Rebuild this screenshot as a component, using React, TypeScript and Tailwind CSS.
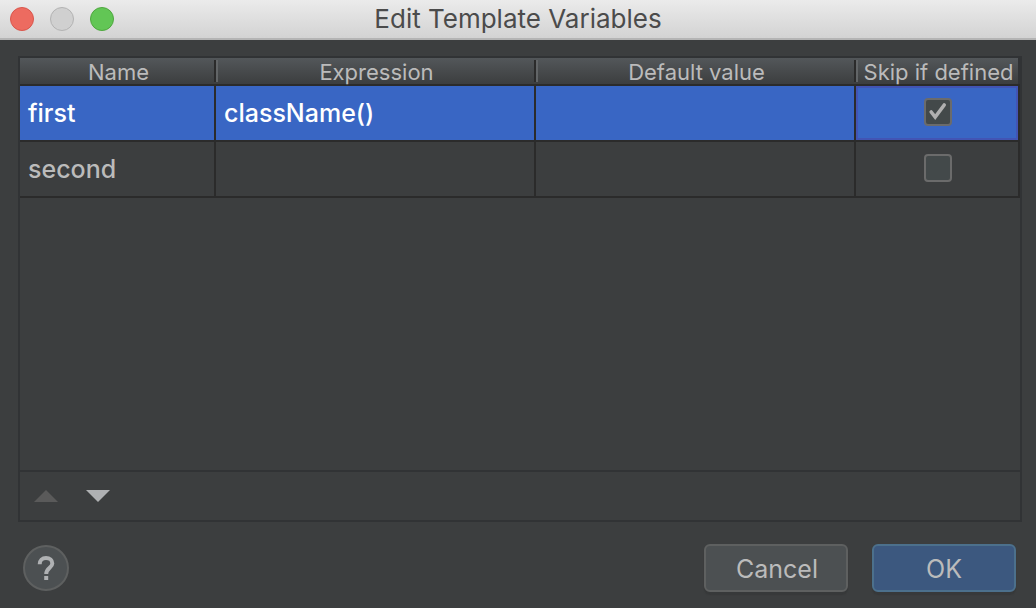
import { useState } from "react";

type Variable = { name: string; expression: string; defaultValue: string; skip: boolean };

const initial: Variable[] = [
  { name: "first", expression: "className()", defaultValue: "", skip: true },
  { name: "second", expression: "", defaultValue: "", skip: false },
];

const columns = ["Name", "Expression", "Default value", "Skip if defined"];

function TitleBar() {
  return (
    <header className="grid h-10 shrink-0 grid-cols-[1fr_auto_1fr] items-center border-b-2 border-[#b4b4b4] bg-linear-to-b from-[#ebebeb] to-[#d3d3d3] px-2.5">
      <div className="flex gap-4">
        <button type="button" aria-label="Close" className="size-6 rounded-full border border-[#d9564c] bg-[#ed6b60]" />
        <button type="button" aria-label="Minimize" disabled className="size-6 rounded-full border border-[#b3b3b3] bg-[#d0d0d0]" />
        <button type="button" aria-label="Zoom" className="size-6 rounded-full border border-[#4fa73f] bg-[#62c655]" />
      </div>
      <h1 className="text-[26px] leading-8 text-[#4b4b4b]">Edit Template Variables</h1>
    </header>
  );
}

function SkipBox({ checked, label, onChange }: { checked: boolean; label: string; onChange: () => void }) {
  return (
    <span className="relative inline-flex size-7 align-middle">
      <input
        type="checkbox"
        aria-label={label}
        checked={checked}
        onChange={onChange}
        className="size-7 appearance-none rounded-[4px] border-2 border-[#6b6b6b] bg-[#43494a]"
      />
      {checked && (
        <svg viewBox="0 0 28 28" className="pointer-events-none absolute inset-0 size-7" fill="none" stroke="#b0b0b0" strokeWidth="3.6" strokeLinejoin="miter">
          <path d="M7.2 14 L11.2 19 L20.2 7" strokeLinecap="round" />
        </svg>
      )}
    </span>
  );
}

export default function App() {
  const [rows, setRows] = useState(initial);
  const toggle = (index: number) =>
    setRows(rows.map((row, i) => (i === index ? { ...row, skip: !row.skip } : row)));

  return (
    <div className="flex min-h-screen flex-col bg-[#3c3e3f] font-['Inter',sans-serif] text-[#bbbbbb]">
      <TitleBar />
      <main className="flex grow flex-col pt-4 pr-3.5 pb-4 pl-[18px]">
        <section className="flex grow flex-col border-2 border-[#313335]">
          <div className="grow">
            <table className="w-full table-fixed border-separate border-spacing-0">
              <colgroup>
                <col className="w-[19.6%]" />
                <col className="w-[32%]" />
                <col className="w-[32%]" />
                <col className="w-[16.4%]" />
              </colgroup>
              <thead>
                <tr className="h-7">
                  {columns.map((column, i) => (
                    <th key={column} scope="col" className="border-b-2 border-[#2b2b2b] bg-linear-to-b from-[#53575a] to-[#3c3e3f] p-0 text-[22px] leading-6 font-normal whitespace-nowrap">
                      <div className={i < 3 ? "flex h-[26px] items-center justify-center" : "flex h-[26px] items-center justify-center border-r-2 border-[#313335]"}>
                        <span className="grow pt-0.5 pl-[3px]">{column}</span>
                        {i < 3 && <span className="-mr-0.5 h-[22px] w-1 border-r-2 border-l-2 border-r-[#626567] border-l-[#2b2b2b]" />}
                      </div>
                    </th>
                  ))}
                </tr>
              </thead>
              <tbody>
                {rows.map((row, i) => {
                  const cell =
                    i === 0
                      ? "truncate border-r-2 border-b-2 border-[#2b2b2b] bg-[#3966c4] px-2 py-0 text-white"
                      : "truncate border-r-2 border-b-2 border-[#2b2b2b] px-2 py-0";
                  return (
                    <tr key={row.name} className="h-14 text-[25px] leading-8 font-medium">
                      <td className={cell}>{row.name}</td>
                      <td className={cell}>{row.expression}</td>
                      <td className={cell}>{row.defaultValue}</td>
                      <td className={i === 0 ? "border-r-2 border-b-2 border-[#2b2b2b] bg-[#3966c4] p-0" : "border-r-2 border-b-2 border-[#2b2b2b] p-0"}>
                        <div className={i === 0 ? "flex h-[54px] items-center justify-center border-2 border-[#4254b4] pb-0.5 pl-0.5" : "flex h-[54px] items-center justify-center pb-0.5 pl-0.5"}>
                          <SkipBox checked={row.skip} label={`Skip ${row.name} if defined`} onChange={() => toggle(i)} />
                        </div>
                      </td>
                    </tr>
                  );
                })}
              </tbody>
            </table>
          </div>
          <div className="flex h-[50px] shrink-0 items-center gap-7 border-t-2 border-[#313335] px-3.5">
            <button type="button" aria-label="Move up" disabled>
              <svg viewBox="0 0 24 12" className="h-3 w-6" fill="#5a5a5a"><path d="M0 12 L12 0 L24 12 Z" /></svg>
            </button>
            <button type="button" aria-label="Move down">
              <svg viewBox="0 0 24 12" className="h-3 w-6" fill="#afb1b3"><path d="M0 0 H24 L12 12 Z" /></svg>
            </button>
          </div>
        </section>
        <footer className="mt-[22px] flex items-center gap-6 pr-1.5 pl-[5px] text-[25px] leading-8">
          <button type="button" aria-label="Help" className="mr-auto flex size-[46px] items-center justify-center rounded-full border-2 border-[#5e6060] bg-[#4c5052]">
            <svg viewBox="0 0 18 26" className="h-[26px] w-[18px]" fill="none" stroke="#afb1b3" strokeWidth="4">
              <path d="M2.7 9.2 C2.7 5.2 5.3 3 9 3 C12.8 3 15.3 5.2 15.3 8.4 C15.3 12.6 9.2 13 9.2 19" />
              <path d="M9.2 21 V25" />
            </svg>
          </button>
          <button type="button" className="h-12 w-36 rounded-md border-2 border-[#5e6060] bg-[#4c5052] pt-0.5 pl-0.5 shadow-[0_3px_1px_#37393a]">Cancel</button>
          <button type="button" className="h-12 w-36 rounded-md border-2 border-[#4c708c] bg-[#3c587f] pt-0.5 shadow-[0_3px_1px_#37393a]">OK</button>
        </footer>
      </main>
    </div>
  );
}
